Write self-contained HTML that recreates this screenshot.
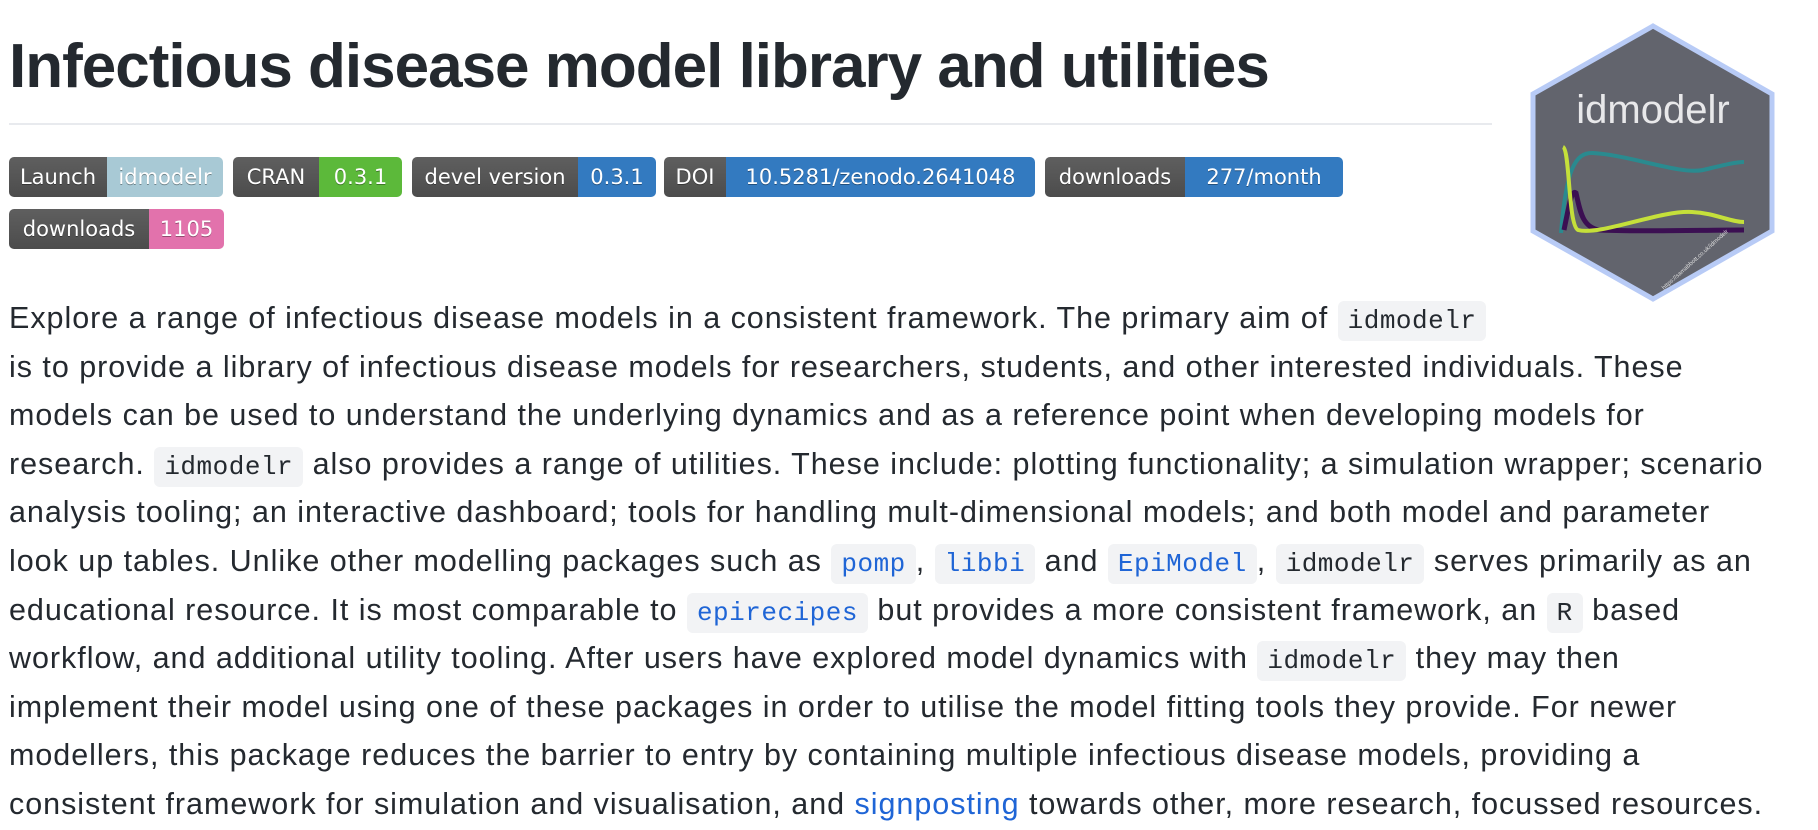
<!DOCTYPE html>
<html><head><meta charset="utf-8"><style>
html,body{margin:0;padding:0;background:#fff;width:1818px;height:830px;overflow:hidden}
body{font-family:"Liberation Sans",sans-serif;color:#24292f;position:relative}
h1{position:absolute;left:9px;top:22px;margin:0;font-size:62px;font-weight:bold;letter-spacing:-1px;line-height:90px;white-space:nowrap}
.hr{position:absolute;left:9px;top:123px;width:1483px;height:2px;background:#e8eaee}
.badge{position:absolute;height:40px;display:flex;border-radius:5px;overflow:hidden;font-family:"DejaVu Sans","Liberation Sans",sans-serif;font-size:21px;color:#fff;text-shadow:0 1px 0 rgba(1,1,1,.35);box-shadow:inset 0 -2px 0 rgba(0,0,0,.1)}
.badge span{display:flex;align-items:center;justify-content:center;height:40px;white-space:nowrap}
.l{background:linear-gradient(#5f5f5f,#4c4c4c)}
p{position:absolute;left:9px;top:294px;margin:0;font-size:30.5px;letter-spacing:0.97px;line-height:48.6px;white-space:nowrap}
code{font-family:"Liberation Mono","DejaVu Sans Mono",monospace;font-size:26px;line-height:0;letter-spacing:0.5px;background:#f2f3f5;border-radius:6px;padding:5px 10px}
a{color:#1f65d6;text-decoration:none}
</style></head><body>
<h1>Infectious disease model library and utilities</h1>
<div class="hr"></div>

<div class="badge" style="left:9px;top:157px;width:214px"><span class="l" style="width:98px">Launch</span><span style="flex:1;background:#a8c9d5">idmodelr</span></div>
<div class="badge" style="left:233px;top:157px;width:169px"><span class="l" style="width:86px">CRAN</span><span style="flex:1;background:#5cb93a">0.3.1</span></div>
<div class="badge" style="left:412px;top:157px;width:244px"><span class="l" style="width:166px">devel version</span><span style="flex:1;background:#337ac0">0.3.1</span></div>
<div class="badge" style="left:664px;top:157px;width:371px"><span class="l" style="width:62px">DOI</span><span style="flex:1;background:#337ac0">10.5281/zenodo.2641048</span></div>
<div class="badge" style="left:1045px;top:157px;width:298px"><span class="l" style="width:140px">downloads</span><span style="flex:1;background:#337ac0">277/month</span></div>
<div class="badge" style="left:9px;top:209px;width:215px"><span class="l" style="width:140px">downloads</span><span style="flex:1;background:#e272ac">1105</span></div>

<svg style="position:absolute;left:0;top:0" width="1818" height="330">
<polygon points="1653,26 1772,94 1772,231 1653,299 1533,231 1533,94" fill="#62646d" stroke="#b8cbf6" stroke-width="5"/>
<text x="1653" y="123" text-anchor="middle" font-family="Liberation Sans,sans-serif" font-size="40" fill="#e8e8ea">idmodelr</text>
<path d="M1561,233 C1566,170 1575,152 1593,153 C1630,155 1680,175 1703,170 C1720,166 1735,162 1744,162" fill="none" stroke="#2a8a8f" stroke-width="4"/>
<path d="M1564,230 C1570,200 1572,190 1576,193 C1580,210 1582,228 1600,230 C1650,232 1700,230 1744,230" fill="none" stroke="#3b0f52" stroke-width="5"/>
<path d="M1563,147 C1570,150 1568,225 1578,230 C1600,236 1660,210 1692,212 C1715,213 1730,222 1744,222" fill="none" stroke="#c5e03a" stroke-width="4"/>
<text x="0" y="0" transform="translate(1664,290) rotate(-42)" font-family="Liberation Sans,sans-serif" font-size="6" fill="#ddd">https://samabbott.co.uk/idmodelr</text>
</svg>

<p>Explore a range of infectious disease models in a consistent framework. The primary aim of <code>idmodelr</code><br>
is to provide a library of infectious disease models for researchers, students, and other interested individuals. These<br>
models can be used to understand the underlying dynamics and as a reference point when developing models for<br>
research. <code>idmodelr</code> also provides a range of utilities. These include: plotting functionality; a simulation wrapper; scenario<br>
analysis tooling; an interactive dashboard; tools for handling mult-dimensional models; and both model and parameter<br>
look up tables. Unlike other modelling packages such as <code><a>pomp</a></code>, <code><a>libbi</a></code> and <code><a>EpiModel</a></code>, <code>idmodelr</code> serves primarily as an<br>
educational resource. It is most comparable to <code><a>epirecipes</a></code> but provides a more consistent framework, an <code>R</code> based<br>
workflow, and additional utility tooling. After users have explored model dynamics with <code>idmodelr</code> they may then<br>
implement their model using one of these packages in order to utilise the model fitting tools they provide. For newer<br>
modellers, this package reduces the barrier to entry by containing multiple infectious disease models, providing a<br>
consistent framework for simulation and visualisation, and <a>signposting</a> towards other, more research, focussed resources.</p>
</body></html>
